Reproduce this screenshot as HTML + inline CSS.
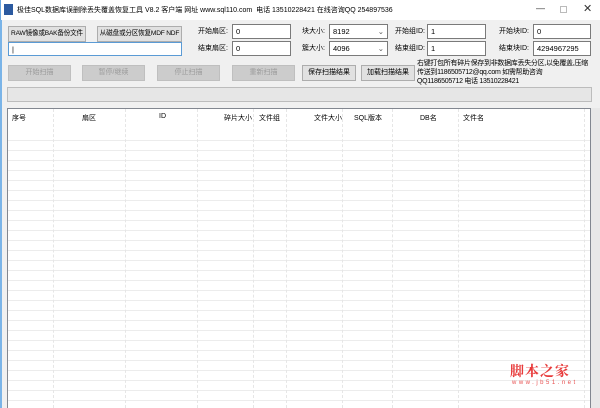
<!DOCTYPE html>
<html><head><meta charset="utf-8"><style>
*{box-sizing:border-box;margin:0;padding:0}
body{width:600px;height:408px;overflow:hidden;background:#f0f0f0;font-family:"Liberation Sans","Noto Sans CJK SC",sans-serif;font-size:7px;color:#000;position:relative}
.a{position:absolute;white-space:nowrap}
.title{left:0;top:0;width:600px;height:20px;background:#fff;border-left:1px solid #6aa6e0}
.btn{position:absolute;background:#e1e1e1;border:1px solid #adadad;text-align:center;line-height:14px;font-size:7px;white-space:nowrap;overflow:hidden}
.dis{background:#cccccc;border-color:#bfbfbf;color:#9a9a9a}
.inp{position:absolute;background:#fff;border:1px solid #7a7a7a;height:15px;padding-left:3px;line-height:13px;font-size:7.5px}
.lbl{position:absolute;font-size:7px;line-height:10px;white-space:nowrap}
.col{position:absolute;top:0;bottom:0;border-left:1px dashed #e6e6e6}
</style></head><body>
<div class="a title"></div>
<div class="a" style="left:4px;top:4px;width:9px;height:11px;background:#2c5aa0"></div>
<div class="a" style="left:17px;top:5px;font-size:7px">极佳SQL数据库误删除丢失覆盖恢复工具 V8.2 客户端 网址 www.sql110.com &nbsp;电话 13510228421 在线咨询QQ 254897536</div>
<div class="a" style="left:536px;top:3px;font-size:9px;color:#333">—</div>
<div class="a" style="left:560px;top:6px;width:7px;height:7px;border:1px solid #bbb"></div>
<div class="a" style="left:583px;top:2px;font-size:11px;color:#333">✕</div>
<div class="a" style="left:0;top:20px;width:2px;height:388px;background:#7ab4e8"></div>

<div class="btn" style="left:8px;top:26px;width:78px;height:16px;font-size:6.6px;letter-spacing:-0.2px">RAW镜像或BAK备份文件</div>
<div class="btn" style="left:97px;top:26px;width:85px;height:16px;font-size:6.6px;letter-spacing:-0.2px">从磁盘或分区恢复MDF NDF</div>
<div class="inp" style="left:8px;top:42px;width:174px;height:14px;border-color:#5b9bd5">|</div>
<div class="lbl" style="left:198px;top:27px">开始扇区:</div>
<div class="lbl" style="left:198px;top:44px">结束扇区:</div>
<div class="inp" style="left:232px;top:24px;width:59px">0</div>
<div class="inp" style="left:232px;top:41px;width:59px">0</div>
<div class="lbl" style="left:302px;top:27px">块大小:</div>
<div class="lbl" style="left:302px;top:44px">簇大小:</div>
<div class="inp" style="left:329px;top:24px;width:59px">8192<span style="position:absolute;right:3px;color:#555">⌄</span></div>
<div class="inp" style="left:329px;top:41px;width:59px">4096<span style="position:absolute;right:3px;color:#555">⌄</span></div>
<div class="lbl" style="left:395px;top:27px">开始组ID:</div>
<div class="lbl" style="left:395px;top:44px">结束组ID:</div>
<div class="inp" style="left:427px;top:24px;width:59px">1</div>
<div class="inp" style="left:427px;top:41px;width:59px">1</div>
<div class="lbl" style="left:499px;top:27px">开始块ID:</div>
<div class="lbl" style="left:499px;top:44px">结束块ID:</div>
<div class="inp" style="left:533px;top:24px;width:58px">0</div>
<div class="inp" style="left:533px;top:41px;width:58px">4294967295</div>

<div class="btn dis" style="left:8px;top:65px;width:63px;height:16px">开始扫描</div>
<div class="btn dis" style="left:82px;top:65px;width:63px;height:16px">暂停/继续</div>
<div class="btn dis" style="left:157px;top:65px;width:63px;height:16px">停止扫描</div>
<div class="btn dis" style="left:232px;top:65px;width:63px;height:16px">重新扫描</div>
<div class="btn" style="left:302px;top:65px;width:54px;height:16px">保存扫描结果</div>
<div class="btn" style="left:361px;top:65px;width:54px;height:16px">加载扫描结果</div>
<div class="lbl" style="left:417px;top:59px;line-height:9px;font-size:7px;letter-spacing:-0.3px">右键打包所有碎片保存到非数据库丢失分区,以免覆盖,压缩<br>传送到1186505712@qq.com 如需帮助咨询<br>QQ1186505712 电话 13510228421</div>

<div class="a" style="left:7px;top:87px;width:585px;height:15px;background:#e6e6e6;border:1px solid #bcbcbc"></div>

<div class="a" style="left:7px;top:108px;width:584px;height:300px;background:#fff;border:1px solid #828790;border-bottom:none;overflow:hidden;
background-image:repeating-linear-gradient(to bottom,transparent 0,transparent 9px,#ececec 9px,#ececec 10px);background-position:0 22px;background-size:100% 100%">
<div class="a" style="left:0;top:0;width:100%;height:22px;background:#fff"></div>
<div class="col" style="left:45px"></div><div class="col" style="left:117px"></div><div class="col" style="left:189px"></div><div class="col" style="left:245px"></div><div class="col" style="left:278px"></div><div class="col" style="left:334px"></div><div class="col" style="left:384px"></div><div class="col" style="left:450px"></div><div class="col" style="left:576px"></div>
<div class="a" style="left:4px;top:4px">序号</div>
<div class="a" style="left:74px;top:4px">扇区</div>
<div class="a" style="left:151px;top:4px">ID</div>
<div class="a" style="left:216px;top:4px">碎片大小</div>
<div class="a" style="left:251px;top:4px">文件组</div>
<div class="a" style="left:306px;top:4px">文件大小</div>
<div class="a" style="left:346px;top:4px">SQL版本</div>
<div class="a" style="left:412px;top:4px">DB名</div>
<div class="a" style="left:455px;top:4px">文件名</div>
</div>
<div class="a" style="left:591px;top:108px;width:9px;height:300px;background:#e8e8e8"></div>
<div class="a" style="left:510px;top:361px;font-size:14px;font-weight:bold;color:#e83a3a;letter-spacing:1px;font-family:'Noto Serif CJK SC',serif">脚本之家</div>
<div class="a" style="left:512px;top:380px;font-size:6px;color:#e85050;letter-spacing:2.5px">www.jb51.net</div>
</body></html>
